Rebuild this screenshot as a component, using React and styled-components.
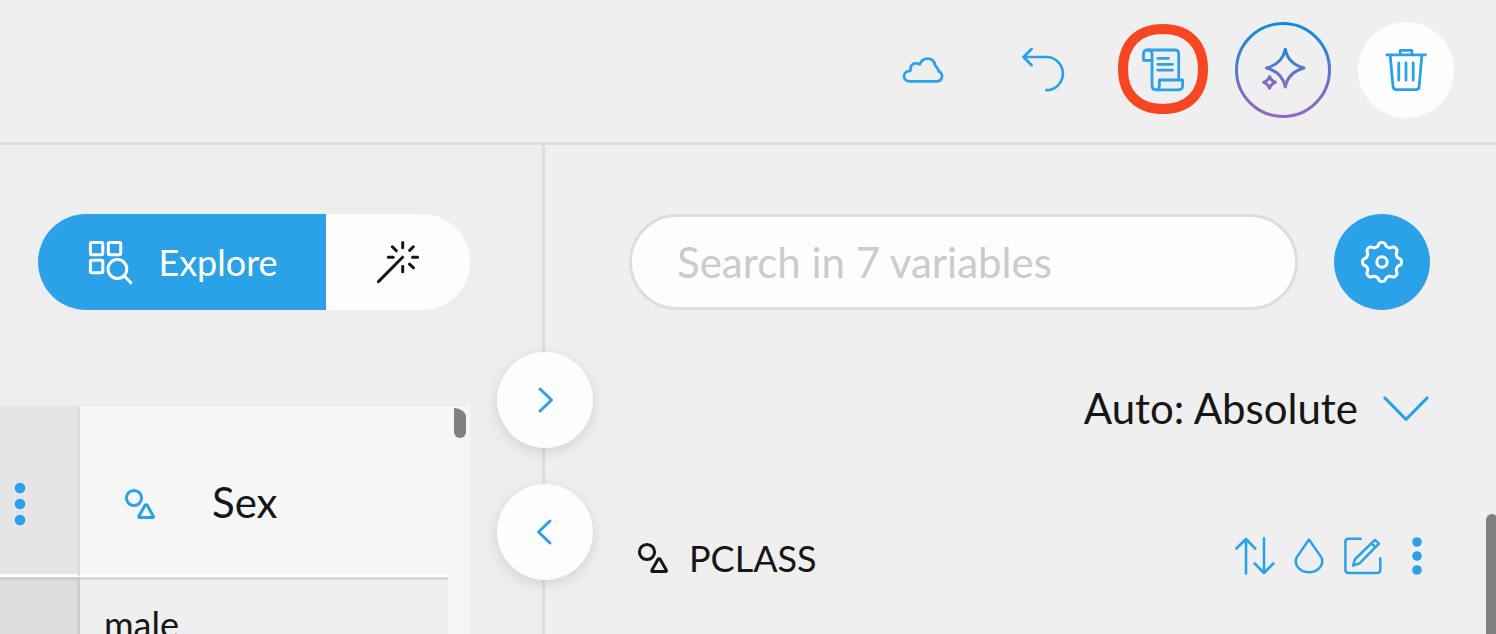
import React from "react";
import styled, { createGlobalStyle, css } from "styled-components";

const color = {
  blue: "#2ba2e8",
  page: "#efefef",
  pane: "#eeeeee",
  line: "#dddddd",
  ink: "#161616",
  white: "#fdfdfd",
  thumb: "#808080",
  alert: "#f64722",
};

const GlobalStyle = createGlobalStyle`
  *, *::before, *::after { box-sizing: border-box; }
  body {
    margin: 0;
    background: ${color.page};
    color: ${color.ink};
    font-family: Lato, "Liberation Sans", sans-serif;
  }
  button, input, select { font: inherit; color: inherit; }
`;

/* ---------- icons ---------- */

const Svg = styled.svg`
  display: block;
  flex: none;
  width: ${(p) => p.$size}px;
  height: ${(p) => p.$size}px;
  fill: none;
  stroke: currentColor;
  stroke-width: ${(p) => p.$stroke || 3};
  stroke-linecap: round;
  stroke-linejoin: round;
`;

function Icon({ size = 48, stroke, children }) {
  return (
    <Svg $size={size} $stroke={stroke} viewBox={`0 0 ${size} ${size}`} aria-hidden="true">
      {children}
    </Svg>
  );
}

const CloudIcon = () => (
  <Icon stroke={2.8}>
    <path d="M10.8 35.4C7.3 35.4 5 33 5 30.2C5 27 7.8 24.8 11.4 24.8C11 20 13.3 17 17.5 17.3C18.8 17.4 20 17.8 20.8 18.3C22.3 14.6 25 12.7 28.4 12.7C32.8 12.7 35.6 15.6 36.2 19.6C38 21.3 39 23 39.6 25C41.8 26.2 43.2 28 43 30.3C42.7 33.5 40.5 35.4 37.3 35.4Z" />
  </Icon>
);

const UndoIcon = () => (
  <Icon stroke={2.7}>
    <path d="M12.6 3L4.5 11L12.6 19.2M4.5 11H27.3A16.6 16.6 0 0 1 27.3 44.2" />
  </Icon>
);

const ScrollIcon = () => (
  <Icon stroke={2.8}>
    <path d="M13 14.3H4.5V8C4.5 5.3 6 4 8.5 4H36C38.6 4 39.7 5.5 39.7 8V33.8" />
    <path d="M8.8 4C12 4 13 5.5 13 8.5V39C13 42 14.3 43.8 17 43.8H39.5C42.3 43.8 43.6 42.3 43.6 39.8V34H20.4V39.5C20.4 42.3 19.3 43.8 17 43.8" />
    <path d="M18.8 12.3H29.6M18.8 18.3H33.6M18.8 24.1H33.4" />
  </Icon>
);

const SparkleIcon = () => (
  <Icon size={96} stroke={3}>
    <defs>
      <linearGradient id="ring" gradientUnits="userSpaceOnUse" x1="0" y1="0" x2="0" y2="96">
        <stop offset="0" stopColor="#0d8ddb" />
        <stop offset="1" stopColor="#9a66c0" />
      </linearGradient>
      <linearGradient id="star" gradientUnits="userSpaceOnUse" x1="0" y1="26" x2="0" y2="68">
        <stop offset="0" stopColor="#1787d8" />
        <stop offset="1" stopColor="#9a66c0" />
      </linearGradient>
    </defs>
    <circle cx="48" cy="48" r="46.5" stroke="url(#ring)" />
    <path
      stroke="url(#star)"
      d="M50.3 27.3C52 36 57 43 69 46C57 49.3 52 56 50.3 65C48.5 56 43.5 49.3 31.6 46C43.5 43 48.5 36 50.3 27.3Z"
    />
    <path
      stroke="url(#star)"
      d="M34.6 54.6C35.6 57.6 37 59.2 40.4 60.3C37 61.5 35.6 63 34.6 66.2C33.6 63 32.2 61.5 28.8 60.3C32.2 59.2 33.6 57.6 34.6 54.6Z"
    />
  </Icon>
);

const TrashIcon = () => (
  <Icon stroke={2.8}>
    <path d="M4.8 8.9H43.4M18.2 8.9V4.3H29.8V8.9" />
    <path d="M8.2 9.5L11 40.3C11.3 42.6 12.3 43.6 14.4 43.6H34C36 43.6 37 42.6 37.2 40.3L39.8 9.5" />
    <path d="M16.8 17V34.2M24 17V34.2M31.2 17V34.2" />
  </Icon>
);

const ExploreIcon = () => (
  <Icon>
    <rect x="4.4" y="4.4" width="12.4" height="12.4" rx="1.5" />
    <rect x="22.3" y="4.4" width="12.4" height="12.4" rx="1.5" />
    <rect x="4.4" y="22.3" width="12.4" height="12.4" rx="1.5" />
    <circle cx="31.4" cy="31" r="9.4" />
    <path d="M38.3 38L44.8 44.8" />
  </Icon>
);

const WandIcon = () => (
  <Icon>
    <path d="M4.4 43.6L28.6 19.2" />
    <path d="M28.7 4.5V9.8M14.3 19.2H19.3M38.5 19.2H43.7M28.7 28.3V33.7M18.4 8.8L22.3 12.8M39.3 8.8L35.7 12.4M35.5 26.2L39.5 29.8" />
  </Icon>
);

const gearPath = (() => {
  const points = [];
  for (let deg = 0; deg < 360; deg += 3) {
    const a = (deg * Math.PI) / 180;
    const wave = Math.tanh(1.6 * Math.cos(8 * a)) / Math.tanh(1.6);
    const r = 17.7 + 1.8 * wave;
    points.push(`${(24 + r * Math.cos(a)).toFixed(2)} ${(24 + r * Math.sin(a)).toFixed(2)}`);
  }
  return `M${points.join("L")}Z`;
})();

const GearIcon = () => (
  <Icon>
    <path d={gearPath} />
    <circle cx="24" cy="24" r="5.2" />
  </Icon>
);

const ShapesIcon = () => (
  <Icon size={32}>
    <circle cx="10" cy="10" r="7.6" />
    <path d="M20.9 17.5C21.4 16.6 22.8 16.6 23.3 17.5L29.2 28C29.7 28.9 29.3 29.6 28.3 29.6H15.9C14.9 29.6 14.5 28.9 15 28Z" />
  </Icon>
);

const ChevronIcon = ({ d }) => (
  <Icon>
    <path d={d} />
  </Icon>
);

const DotsIcon = ({ size, gap, r }) => (
  <Icon size={size}>
    {[-gap, 0, gap].map((y) => (
      <circle key={y} cx={size / 2} cy={size / 2 + y} r={r} fill="currentColor" stroke="none" />
    ))}
  </Icon>
);

const SortIcon = () => (
  <Icon size={54} stroke={2.6}>
    <path d="M18 44.5V10M8.4 19.5L18 10L27.2 19.5M36 9.3V44M26.7 34.5L36 44L45.3 34.5" />
  </Icon>
);

const DropIcon = () => (
  <Icon size={54} stroke={2.5}>
    <path d="M27 10.5L14.5 28.6C11.6 35.6 17.6 43.3 27 43.3S42.4 35.6 39.5 28.6Z" />
  </Icon>
);

const EditIcon = () => (
  <Icon size={54} stroke={2.5}>
    <path d="M24.8 9.8H12.5C10.3 9.8 9.4 10.8 9.4 13V40.8C9.4 43 10.3 44 12.5 44H41.2C43.4 44 44.3 43 44.3 40.8V29.3" />
    <path d="M17 36.6L19.2 30L38.9 10.8L43 14.6L23.8 34.2ZM35.4 14.4L39.4 18.2" />
  </Icon>
);

/* ---------- shell ---------- */

const Shell = styled.div`
  display: flex;
  flex-direction: column;
  height: 100vh;
  overflow: hidden;
`;

const Toolbar = styled.header`
  display: flex;
  justify-content: flex-end;
  gap: 27px;
  padding: 22px 42px 24px;
  border-bottom: 3px solid ${color.line};
`;

const ToolGroup = styled.div`
  display: flex;
  gap: 24px;
`;

const RoundButton = styled.button`
  position: relative;
  display: flex;
  flex: none;
  align-items: center;
  justify-content: center;
  width: 96px;
  height: 96px;
  padding: 0;
  border: 0;
  border-radius: 50%;
  cursor: pointer;
  background: ${(p) => (p.$tone === "white" ? color.white : p.$tone === "blue" ? color.blue : "transparent")};
  color: ${(p) => (p.$tone === "blue" ? "#fff" : color.blue)};
  ${(p) =>
    p.$raised &&
    css`
      box-shadow: 0 4px 14px rgba(0, 0, 0, 0.12);
    `}
`;

const Highlight = styled.svg`
  position: absolute;
  inset: 2px 3px auto;
  width: 90px;
  height: 90px;
  fill: none;
  stroke: ${color.alert};
  stroke-width: 10;
`;

const Workspace = styled.main`
  display: flex;
  flex: 1;
  min-height: 0;
`;

/* ---------- data pane ---------- */

const DataPane = styled.section`
  position: relative;
  display: flex;
  flex: none;
  flex-direction: column;
  gap: 96px;
  width: 545px;
  padding-top: 69px;
  border-right: 3px solid ${color.line};
  background: ${color.pane};
`;

const ModeSwitch = styled.div`
  display: flex;
  flex: none;
  height: 96px;
  margin: 0 72px 0 38px;
  border-radius: 48px;
  overflow: hidden;
`;

const ModeButton = styled.button`
  display: flex;
  flex: ${(p) => (p.$active ? 2 : 1)} 0 0;
  align-items: center;
  justify-content: center;
  gap: 24px;
  padding: 0;
  border: 0;
  font-size: 36px;
  cursor: pointer;
  background: ${(p) => (p.$active ? color.blue : color.white)};
  color: ${(p) => (p.$active ? "#fff" : color.ink)};
`;

const TableScroller = styled.div`
  position: relative;
  flex: 1;
  min-height: 0;
  margin-right: 72px;
  padding-right: 22px;
  overflow: hidden;
  background: #f6f6f6;
`;

const DataTable = styled.table`
  width: 100%;
  table-layout: fixed;
  border-collapse: separate;
  border-spacing: 0;
  text-align: left;
`;

const HeadCell = styled.th`
  height: 171px;
  width: ${(p) => (p.$index ? "80px" : "auto")};
  padding: ${(p) => (p.$index ? "28px 0 0" : "28px 0 0 44px")};
  border-bottom: 3px solid #fff;
  border-right: ${(p) => (p.$index ? `3px solid ${color.line}` : "0")};
  background: ${(p) => (p.$index ? "#e5e5e5" : "#f6f6f6")};
  font-size: 42px;
  font-weight: 400;
  line-height: 48px;
`;

const HeadLabel = styled.div`
  display: flex;
  align-items: center;
  gap: 56px;
`;

const HeadText = styled.span`
  padding-bottom: 4px;
`;

const BlueMark = styled.span`
  color: ${color.blue};
`;

const BodyCell = styled.td`
  height: 90px;
  padding: 0 0 0 ${(p) => (p.$index ? 0 : 24)}px;
  border-top: 3px solid ${(p) => (p.$index ? "#cccccc" : "#dadada")};
  border-right: ${(p) => (p.$index ? "3px solid #cccccc" : "0")};
  background: ${(p) => (p.$index ? "#dddddd" : color.page)};
  font-size: 36px;
`;

const MenuButton = styled.button`
  display: flex;
  align-items: center;
  justify-content: center;
  width: ${(p) => p.$size}px;
  height: ${(p) => p.$size}px;
  padding: 0;
  border: 0;
  background: none;
  color: ${color.blue};
  cursor: pointer;
`;

const TableThumb = styled.div`
  position: absolute;
  top: 2px;
  right: 4px;
  width: 12px;
  height: 30px;
  border-radius: 0 12px 6px 6px / 0 9px 6px 6px;
  background: ${color.thumb};
`;

const PaneHandles = styled.div`
  position: absolute;
  z-index: 1;
  top: 207px;
  right: -51px;
  display: flex;
  flex-direction: column;
  gap: 36px;
`;

/* ---------- variables pane ---------- */

const VariablesPane = styled.section`
  display: flex;
  flex: 1;
  flex-direction: column;
  min-width: 0;
  padding-top: 69px;
`;

const SearchRow = styled.form`
  display: flex;
  gap: 36px;
  padding: 0 66px 0 84px;
`;

const SearchInput = styled.input`
  flex: 1;
  min-width: 0;
  height: 96px;
  padding: 0 45px;
  border: 3px solid ${color.line};
  border-radius: 48px;
  outline: 0;
  background: ${color.white};
  font-size: 42px;
  &::placeholder { color: #cbcbcb; opacity: 1; }
`;

const ModeRow = styled.div`
  display: flex;
  justify-content: flex-end;
  margin: 51px 66px 0 84px;
`;

const SelectWrap = styled.label`
  position: relative;
  display: flex;
  align-items: center;
  color: ${color.blue};
  > svg { position: absolute; right: 0; pointer-events: none; }
`;

const Select = styled.select`
  appearance: none;
  field-sizing: content;
  height: 96px;
  padding: 0 72px 2px 0;
  border: 0;
  background: none;
  color: ${color.ink};
  font-size: 42px;
  cursor: pointer;
`;

const VariableList = styled.ul`
  position: relative;
  flex: 1;
  min-height: 0;
  margin: 48px 0 0;
  padding: 4px 52px 0 92px;
  overflow: hidden;
  list-style: none;
`;

const VariableRow = styled.li`
  display: flex;
  align-items: center;
  gap: 20px;
  height: 96px;
  font-size: 36px;
`;

const VariableLabel = styled.div`
  display: flex;
  flex: 1;
  align-items: center;
  gap: 20px;
  padding-top: 2px;
`;

const RowActions = styled.div`
  display: flex;
  padding-bottom: 2px;
`;

const ListThumb = styled.div`
  position: absolute;
  top: 9px;
  right: -2px;
  bottom: -12px;
  width: 12px;
  border-radius: 6px;
  background: ${color.thumb};
`;

const variables = ["PCLASS"];
const rows = ["male"];

export default function App() {
  return (
    <Shell>
      <GlobalStyle />
      <Toolbar>
        <ToolGroup>
          <RoundButton aria-label="Cloud"><CloudIcon /></RoundButton>
          <RoundButton aria-label="Undo"><UndoIcon /></RoundButton>
          <RoundButton aria-label="Script">
            <ScrollIcon />
            <Highlight viewBox="0 0 90 90" aria-hidden="true">
              <path d="M45 5C70 5 85 20 85 45S70 85 45 85S5 70 5 45S20 5 45 5Z" />
            </Highlight>
          </RoundButton>
          <RoundButton aria-label="Assistant"><SparkleIcon /></RoundButton>
        </ToolGroup>
        <RoundButton $tone="white" aria-label="Delete"><TrashIcon /></RoundButton>
      </Toolbar>

      <Workspace>
        <DataPane>
          <ModeSwitch>
            <ModeButton $active>
              <ExploreIcon />
              Explore
            </ModeButton>
            <ModeButton aria-label="Transform"><WandIcon /></ModeButton>
          </ModeSwitch>

          <TableScroller>
            <DataTable>
              <thead>
                <tr>
                  <HeadCell $index>
                    <MenuButton $size={40} aria-label="Table menu">
                      <DotsIcon size={48} gap={16} r={5.3} />
                    </MenuButton>
                  </HeadCell>
                  <HeadCell>
                    <HeadLabel>
                      <BlueMark><ShapesIcon /></BlueMark>
                      <HeadText>Sex</HeadText>
                    </HeadLabel>
                  </HeadCell>
                </tr>
              </thead>
              <tbody>
                {rows.map((value) => (
                  <tr key={value}>
                    <BodyCell $index />
                    <BodyCell>{value}</BodyCell>
                  </tr>
                ))}
              </tbody>
            </DataTable>
            <TableThumb />
          </TableScroller>

          <PaneHandles>
            <RoundButton $tone="white" $raised aria-label="Expand data">
              <ChevronIcon d="M19 13L30.5 24L19 35" />
            </RoundButton>
            <RoundButton $tone="white" $raised aria-label="Collapse data">
              <ChevronIcon d="M29 13L17.5 24L29 35" />
            </RoundButton>
          </PaneHandles>
        </DataPane>

        <VariablesPane>
          <SearchRow>
            <SearchInput type="text" aria-label="Search variables" placeholder="Search in 7 variables" />
            <RoundButton type="button" $tone="blue" aria-label="Settings"><GearIcon /></RoundButton>
          </SearchRow>

          <ModeRow>
            <SelectWrap>
              <Select aria-label="Display mode" defaultValue="auto">
                <option value="auto">Auto: Absolute</option>
              </Select>
              <ChevronIcon d="M2.8 12.9L24 34.4L45.2 12.9" />
            </SelectWrap>
          </ModeRow>

          <VariableList>
            {variables.map((name) => (
              <VariableRow key={name}>
                <VariableLabel>
                  <ShapesIcon />
                  {name}
                </VariableLabel>
                <RowActions>
                  <MenuButton $size={54} aria-label="Sort"><SortIcon /></MenuButton>
                  <MenuButton $size={54} aria-label="Colour"><DropIcon /></MenuButton>
                  <MenuButton $size={54} aria-label="Edit"><EditIcon /></MenuButton>
                  <MenuButton $size={54} aria-label="More"><DotsIcon size={54} gap={14} r={4.8} /></MenuButton>
                </RowActions>
              </VariableRow>
            ))}
            <ListThumb as="li" aria-hidden="true" />
          </VariableList>
        </VariablesPane>
      </Workspace>
    </Shell>
  );
}
